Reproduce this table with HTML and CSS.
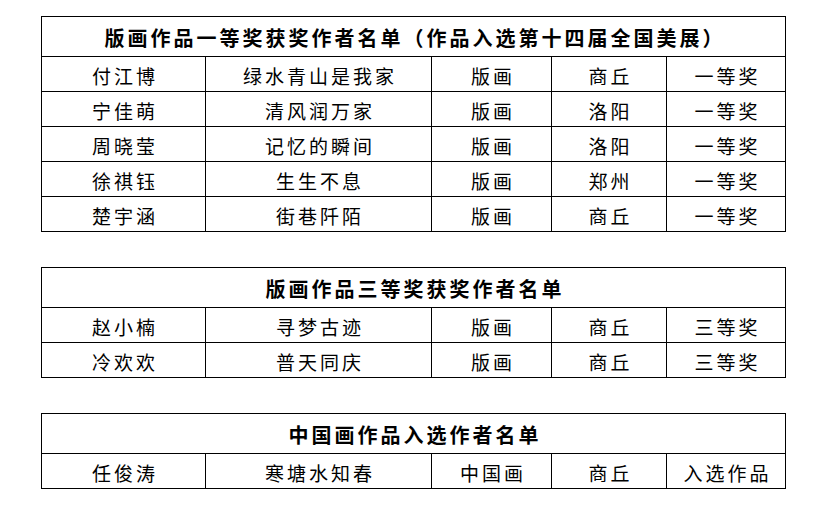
FILE: index.html
```html
<!DOCTYPE html>
<html lang="zh-CN">
<head>
<meta charset="utf-8">
<title>获奖名单</title>
<link rel="stylesheet" href="styles.css">
</head>
<body>
<main class="page">
  <table class="list">
    <colgroup><col class="c1"><col class="c2"><col class="c3"><col class="c4"><col class="c5"></colgroup>
    <tr class="head"><th colspan="5">版画作品一等奖获奖作者名单（作品入选第十四届全国美展）</th></tr>
    <tr><td>付江博</td><td>绿水青山是我家</td><td>版画</td><td>商丘</td><td>一等奖</td></tr>
    <tr><td>宁佳萌</td><td>清风润万家</td><td>版画</td><td>洛阳</td><td>一等奖</td></tr>
    <tr><td>周晓莹</td><td>记忆的瞬间</td><td>版画</td><td>洛阳</td><td>一等奖</td></tr>
    <tr><td>徐祺钰</td><td>生生不息</td><td>版画</td><td>郑州</td><td>一等奖</td></tr>
    <tr><td>楚宇涵</td><td>街巷阡陌</td><td>版画</td><td>商丘</td><td>一等奖</td></tr>
  </table>
  <table class="list">
    <colgroup><col class="c1"><col class="c2"><col class="c3"><col class="c4"><col class="c5"></colgroup>
    <tr class="head"><th colspan="5">版画作品三等奖获奖作者名单</th></tr>
    <tr><td>赵小楠</td><td>寻梦古迹</td><td>版画</td><td>商丘</td><td>三等奖</td></tr>
    <tr><td>冷欢欢</td><td>普天同庆</td><td>版画</td><td>商丘</td><td>三等奖</td></tr>
  </table>
  <table class="list">
    <colgroup><col class="c1"><col class="c2"><col class="c3"><col class="c4"><col class="c5"></colgroup>
    <tr class="head"><th colspan="5">中国画作品入选作者名单</th></tr>
    <tr><td>任俊涛</td><td>寒塘水知春</td><td>中国画</td><td>商丘</td><td>入选作品</td></tr>
  </table>
</main>
</body>
</html>
```
FILE: styles.css
```css
html, body {
  margin: 0;
  padding: 0;
  background: #fff;
}

body {
  font-family: "Noto Sans CJK SC", "Noto Sans", sans-serif;
  color: #000;
}

.page {
  display: flex;
  flex-direction: column;
  gap: 35px;
  padding: 16px 0 0 41px;
}

.list {
  border-collapse: collapse;
  table-layout: fixed;
  width: 745px;
}

.c1 { width: 164px; }
.c2 { width: 226px; }
.c3 { width: 120px; }
.c4 { width: 115px; }
.c5 { width: 119px; }

.list th,
.list td {
  border: 1px solid #000;
  padding: 3px 0 0 0;
  text-align: center;
  vertical-align: middle;
  white-space: nowrap;
  line-height: 1;
}

.list td {
  height: 35px;
  box-sizing: border-box;
  font-size: 19px;
  font-weight: 400;
  letter-spacing: 3px;
  text-indent: 3px;
}

.list th {
  height: 40px;
  box-sizing: border-box;
  font-size: 20px;
  font-weight: 700;
  letter-spacing: 3px;
  text-indent: 3px;
}
```
